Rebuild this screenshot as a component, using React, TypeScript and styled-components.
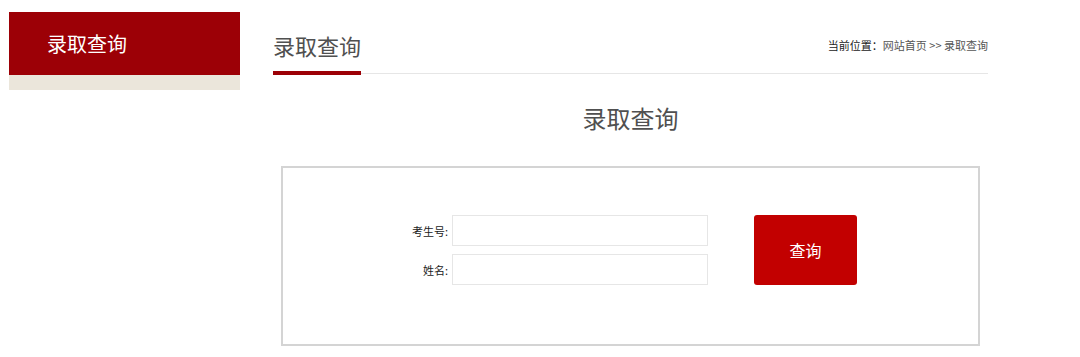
import React from "react";
import styled, { createGlobalStyle } from "styled-components";

const Global = createGlobalStyle`
  html, body { margin: 0; padding: 0; background: #fff; }
  body { font-family: "Noto Sans CJK SC", "Noto Sans", "Liberation Sans", sans-serif; }
  * { box-sizing: border-box; }
`;

const Page = styled.div`
  display: flex;
  align-items: flex-start;
  padding: 12px 0 0 9px;
  width: 1080px;
`;

const Sidebar = styled.aside`
  width: 231px;
  flex: none;
  background: #ebe6db;
  padding-bottom: 15px;
`;

const SideTitle = styled.div`
  height: 63px;
  background: #9c0006;
  color: #fff;
  font-size: 20px;
  line-height: 63px;
  padding-left: 38px;
`;

const Main = styled.main`
  width: 715px;
  margin-left: 33px;
  padding-top: 18px;
  display: flex;
  flex-direction: column;
`;

const Header = styled.div`
  display: flex;
  justify-content: space-between;
  align-items: flex-start;
  border-bottom: 1px solid #e6e6e6;
`;

const HeaderTitle = styled.h2`
  margin: 0 0 -2px 0;
  font-size: 22px;
  font-weight: normal;
  line-height: 30px;
  color: #505050;
  padding-bottom: 11px;
  border-bottom: 4px solid #9c0006;
`;

const Crumbs = styled.div`
  font-size: 11px;
  line-height: 30px;
  color: #555;
`;

const CrumbLabel = styled.span`
  color: #222;
`;

const PageTitle = styled.h1`
  margin: 26px 0 0 0;
  text-align: center;
  font-size: 24px;
  line-height: 36px;
  font-weight: normal;
  color: #505050;
`;

const Box = styled.section`
  margin: 30px 8px 0;
  border: 2px solid #d4d4d4;
  padding: 47px 0 59px;
  display: flex;
  justify-content: center;
  align-items: stretch;
  gap: 46px;
`;

const Fields = styled.div`
  display: grid;
  grid-template-columns: 44px 256px;
  column-gap: 4px;
  row-gap: 8px;
  align-items: center;
`;

const Label = styled.label`
  font-size: 11px;
  color: #222;
  text-align: right;
  white-space: nowrap;
`;

const Input = styled.input`
  width: 256px;
  height: 31px;
  border: 1px solid #e6e6e6;
  outline: none;
  padding: 0 8px;
  font-size: 12px;
`;

const Button = styled.button`
  width: 103px;
  border: none;
  border-radius: 3px;
  background: #c20000;
  color: #fff;
  font-family: inherit;
  font-size: 16px;
  cursor: pointer;
`;

export default function App() {
  return (
    <>
      <Global />
      <Page>
        <Sidebar>
          <SideTitle>录取查询</SideTitle>
        </Sidebar>
        <Main>
          <Header>
            <HeaderTitle>录取查询</HeaderTitle>
            <Crumbs>
              <CrumbLabel>当前位置：</CrumbLabel>网站首页 &gt;&gt; 录取查询
            </Crumbs>
          </Header>
          <PageTitle>录取查询</PageTitle>
          <Box>
            <Fields>
              <Label htmlFor="ksh">考生号:</Label>
              <Input id="ksh" type="text" />
              <Label htmlFor="xm">姓名:</Label>
              <Input id="xm" type="text" />
            </Fields>
            <Button type="button">查询</Button>
          </Box>
        </Main>
      </Page>
    </>
  );
}
